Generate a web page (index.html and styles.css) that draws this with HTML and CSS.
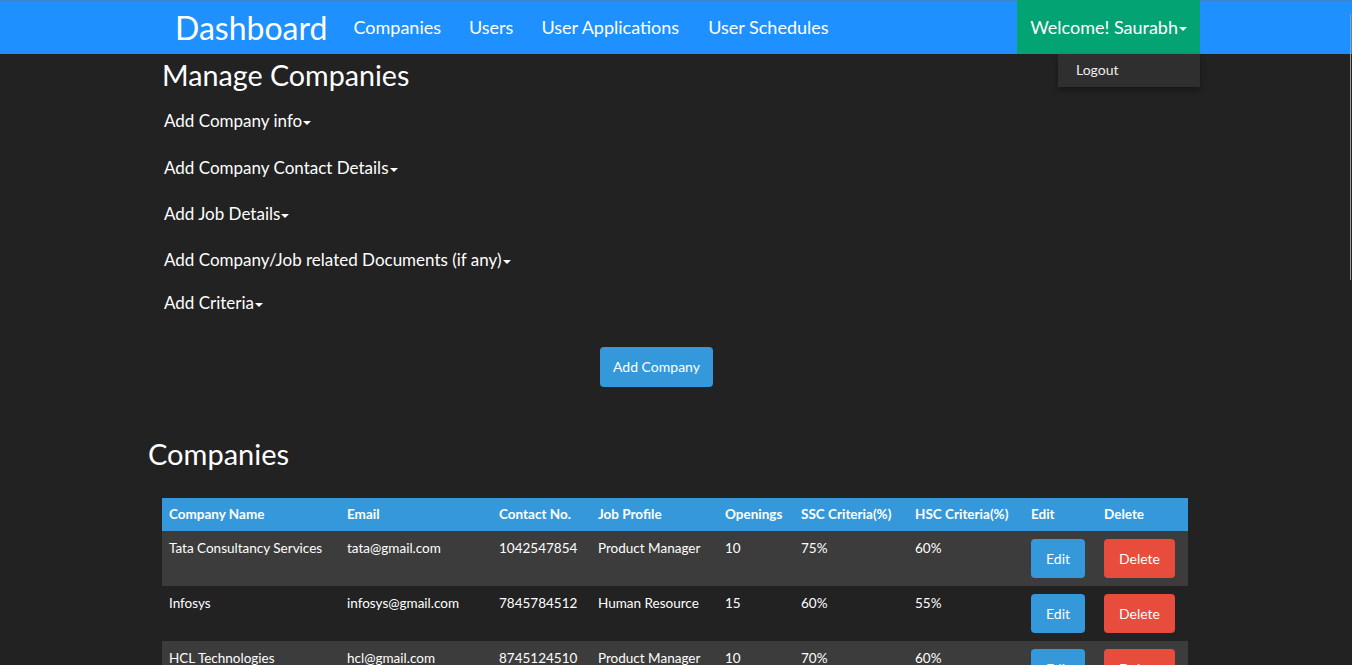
FILE: index.html
```html
<!DOCTYPE html>
<html lang="en">
<head>
<meta charset="utf-8">
<title>Dashboard</title>
<link rel="stylesheet" href="styles.css">
</head>
<body>
<nav class="navbar">
  <div class="nav-inner">
    <a class="brand" href="#">Dashboard</a>
    <ul class="nav-links">
      <li><a href="#">Companies</a></li>
      <li><a href="#">Users</a></li>
      <li><a href="#">User Applications</a></li>
      <li><a href="#">User Schedules</a></li>
    </ul>
    <div class="user-menu">
      <a class="welcome" href="#">Welcome! Saurabh<span class="caret"></span></a>
      <div class="dropdown"><a href="#">Logout</a></div>
    </div>
  </div>
</nav>

<main class="page">
  <h2 class="title">Manage Companies</h2>
  <ul class="toggles">
    <li>Add Company info<span class="caret"></span></li>
    <li>Add Company Contact Details<span class="caret"></span></li>
    <li>Add Job Details<span class="caret"></span></li>
    <li>Add Company/Job related Documents (if any)<span class="caret"></span></li>
    <li>Add Criteria<span class="caret"></span></li>
  </ul>
  <div class="actions"><button class="btn btn-info add-btn">Add Company</button></div>

  <h2 class="list-title">Companies</h2>
  <table class="companies">
    <thead>
      <tr>
        <th class="c-name">Company Name</th>
        <th class="c-email">Email</th>
        <th class="c-contact">Contact No.</th>
        <th class="c-job">Job Profile</th>
        <th class="c-open">Openings</th>
        <th class="c-ssc">SSC Criteria(%)</th>
        <th class="c-hsc">HSC Criteria(%)</th>
        <th class="c-edit">Edit</th>
        <th class="c-del">Delete</th>
      </tr>
    </thead>
    <tbody>
      <tr class="odd">
        <td>Tata Consultancy Services</td><td>tata@gmail.com</td><td>1042547854</td><td>Product Manager</td><td>10</td><td>75%</td><td>60%</td>
        <td><button class="btn btn-info">Edit</button></td><td><button class="btn btn-danger">Delete</button></td>
      </tr>
      <tr>
        <td>Infosys</td><td>infosys@gmail.com</td><td>7845784512</td><td>Human Resource</td><td>15</td><td>60%</td><td>55%</td>
        <td><button class="btn btn-info">Edit</button></td><td><button class="btn btn-danger">Delete</button></td>
      </tr>
      <tr class="odd">
        <td>HCL Technologies</td><td>hcl@gmail.com</td><td>8745124510</td><td>Product Manager</td><td>10</td><td>70%</td><td>60%</td>
        <td><button class="btn btn-info">Edit</button></td><td><button class="btn btn-danger">Delete</button></td>
      </tr>
    </tbody>
  </table>
</main>
<div class="scroll-thumb"></div>
</body>
</html>
```

FILE: styles.css
```css
* { box-sizing: border-box; }
html, body { margin: 0; padding: 0; }
body {
  background: #222222;
  color: #ffffff;
  font-family: Lato, "Open Sans", "Liberation Sans", sans-serif;
  overflow: hidden;
}
a { color: inherit; text-decoration: none; }
ul { list-style: none; margin: 0; padding: 0; }

.navbar {
  background: #1e90ff;
  height: 54px;
  border-top: 1px solid #3c84c8;
}
.nav-inner {
  margin-left: 175px;
  width: 1025px;
  height: 53px;
  display: flex;
  align-items: center;
}
.brand {
  font-size: 32px;
  line-height: 53px;
  margin-right: 26px;
}
.nav-links {
  display: flex;
  gap: 28px;
  font-size: 18px;
  line-height: 53px;
}
.nav-links li:last-child { margin-left: 1px; }
.user-menu {
  margin-left: auto;
  position: relative;
  height: 54px;
  margin-top: -1px;
}
.welcome {
  display: block;
  background: #03a374;
  height: 54px;
  line-height: 54px;
  padding: 0 13px;
  font-size: 18px;
}
.caret {
  display: inline-block;
  width: 0;
  height: 0;
  border-top: 4px solid #ffffff;
  border-left: 4px solid transparent;
  border-right: 4px solid transparent;
  vertical-align: middle;
  margin-left: 1px;
}
.dropdown {
  position: absolute;
  top: 54px;
  right: 0;
  width: 142px;
  height: 33px;
  background: #2f2f2f;
  box-shadow: 0 3px 6px rgba(0,0,0,0.35);
  font-size: 14px;
  line-height: 32px;
  padding-left: 18px;
  color: #eeeeee;
}

.page {
  margin-left: 162px;
  width: 1026px;
}
.title {
  margin: 6px 0 0;
  font-size: 28.7px;
  font-weight: 400;
  line-height: 31px;
}
.toggles {
  margin-top: 18px;
  padding-left: 2px;
  font-size: 17px;
  line-height: 24px;
}
.toggles li { margin-bottom: 22px; }
.toggles li:last-child { margin-bottom: 0; }
.toggles li:nth-child(4) { margin-bottom: 19px; }
.toggles li:nth-child(1) { margin-bottom: 23px; }

.actions {
  display: flex;
  justify-content: center;
  margin-top: 32px;
  padding-right: 37px;
}
.btn {
  font-family: Lato, "Open Sans", "Liberation Sans", sans-serif;
  border: 0;
  border-radius: 4px;
  color: #ffffff;
  font-size: 14px;
  line-height: 19px;
  padding: 10px 15px;
  white-space: nowrap;
  cursor: pointer;
}
.btn-info { background: #3498db; }
.btn-danger { background: #e74c3c; }
.add-btn { line-height: 20px; padding: 10px 0; width: 113px; }

.list-title {
  margin: 50px 0 0 -14px;
  font-size: 29px;
  font-weight: 400;
  line-height: 33px;
}
.companies {
  margin-top: 28px;
  width: 1026px;
  border-collapse: collapse;
  table-layout: fixed;
  font-size: 13.5px;
}
.companies th {
  background: #3498db;
  text-align: left;
  font-weight: 700;
  padding: 8px 7px;
  line-height: 17px;
  height: 33px;
}
.companies td {
  padding: 8px 7px;
  line-height: 18px;
  vertical-align: top;
}
.companies tr.odd td { background: #3c3c3c; }
.c-name { width: 178px; }
.c-email { width: 152px; }
.c-contact { width: 99px; }
.c-job { width: 127px; }
.c-open { width: 76px; }
.c-ssc { width: 114px; }
.c-hsc { width: 116px; }
.c-edit { width: 73px; }
.c-del { width: 91px; }

.scroll-thumb {
  position: fixed;
  top: 14px;
  right: 1px;
  width: 1px;
  height: 266px;
  background: #9a9a9a;
}
```
